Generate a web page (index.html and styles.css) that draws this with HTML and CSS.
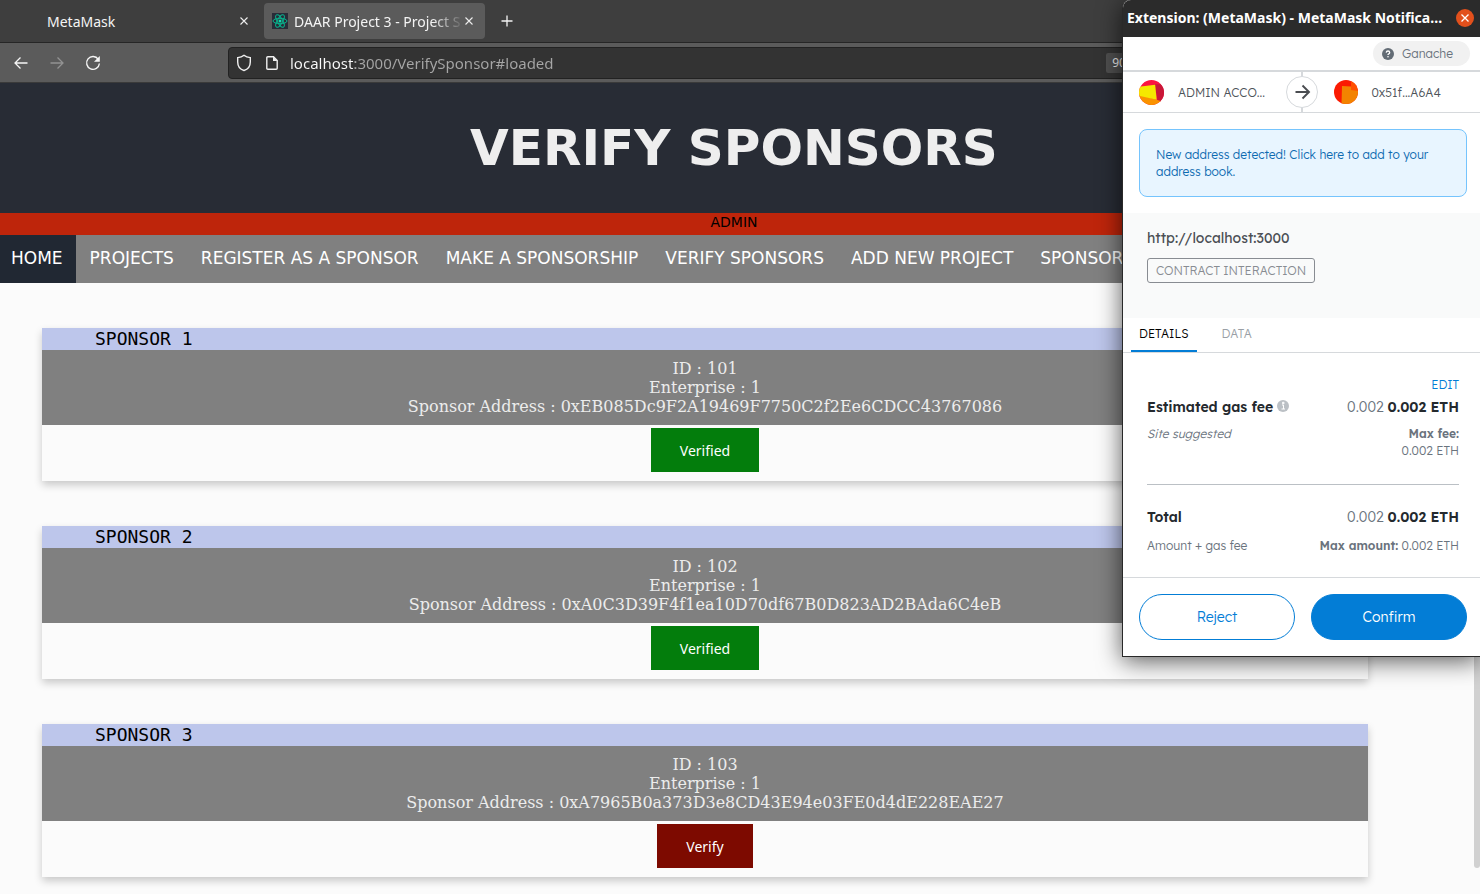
FILE: index.html
```html
<!DOCTYPE html>
<html lang="en">
<head>
<meta charset="utf-8">
<title>DAAR Project 3 - Project Sponsors</title>
<link rel="stylesheet" href="styles.css">
</head>
<body>
<div class="browser">
  <div class="tabs">
    <div class="tab">
      <span class="tab-label">MetaMask</span>
      <button class="icon-btn" aria-label="Close MetaMask tab"><svg width="10" height="10" viewBox="0 0 10 10"><path d="M1.5 1.5l7 7M8.500 1.500l-7 7" stroke="#eee" stroke-width="1.1" fill="none"/></svg></button>
    </div>
    <div class="tab tab-active">
      <svg class="favicon" width="16" height="16" viewBox="0 0 16 16"><rect width="16" height="16" fill="#282c38"/><g fill="none" stroke="#08b38d" stroke-width="1"><ellipse cx="8" cy="8" rx="7" ry="2.700"/><ellipse cx="8" cy="8" rx="7" ry="2.700" transform="rotate(60 8 8)"/><ellipse cx="8" cy="8" rx="7" ry="2.700" transform="rotate(120 8 8)"/></g><circle cx="8" cy="8" r="1.500" fill="#10dcae"/></svg>
      <span class="tab-label tab-fade">DAAR Project 3 - Project S</span>
      <button class="icon-btn" aria-label="Close project tab"><svg width="10" height="10" viewBox="0 0 10 10"><path d="M1.500 1.500l7 7M8.500 1.500l-7 7" stroke="#eee" stroke-width="1.1" fill="none"/></svg></button>
    </div>
    <button class="icon-btn new-tab" aria-label="New tab"><svg width="12" height="12" viewBox="0 0 12 12"><path d="M6 .5v11M.5 6h11" stroke="#f4f4f4" stroke-width="1.300"/></svg></button>
  </div>
  <div class="toolbar">
    <div class="nav-buttons">
      <button class="icon-btn" aria-label="Back"><svg width="16" height="16" viewBox="0 0 16 16" fill="none" stroke="#f6f6f6" stroke-width="1.300"><path d="M14.500 8H2M7.500 2.500L2 8l5.500 5.500"/></svg></button>
      <button class="icon-btn" aria-label="Forward"><svg width="16" height="16" viewBox="0 0 16 16" fill="none" stroke="#929292" stroke-width="1.300"><path d="M1.500 8H14M8.500 2.500L14 8l-5.500 5.500"/></svg></button>
      <button class="icon-btn" aria-label="Reload"><svg width="16" height="16" viewBox="0 0 16 16"><path d="M13.300 4.300A6.400 6.400 0 1 0 14.400 8.500" fill="none" stroke="#f6f6f6" stroke-width="1.400"/><path d="M14.800 1v5.800H9z" fill="#f6f6f6"/></svg></button>
    </div>
    <div class="urlbar">
      <svg width="16" height="18" viewBox="0 0 16 18" fill="none" stroke="#f0f0f0" stroke-width="1.400"><path d="M8 1.300C6.300 2.700 4.200 3.400 1.700 3.600V8c0 3.800 2.300 7.300 6.300 8.500 4-1.200 6.300-4.700 6.300-8.500V3.600C11.800 3.400 9.700 2.700 8 1.300z"/></svg>
      <svg width="12" height="14" viewBox="0 0 12 14"><path d="M1.800.8h5.700l3.700 3.700v7.700q0 1-1 1H1.800q-1 0-1-1V1.800q0-1 1-1z" fill="none" stroke="#f0f0f0" stroke-width="1.400"/><path d="M7 .5v4.600h4.500z" fill="#f0f0f0"/></svg>
      <input class="url" type="text" aria-label="Address" value="localhost:3000/VerifySponsor#loaded">
      <button class="zoom">90%</button>
    </div>
  </div>
  <div class="viewport">
    <div class="page">
      <header class="hero"><h1>VERIFY SPONSORS</h1></header>
      <div class="role">ADMIN</div>
      <nav class="menu">
        <a class="current" href="#home">HOME</a>
        <a href="#projects">PROJECTS</a>
        <a href="#register">REGISTER AS A SPONSOR</a>
        <a href="#make">MAKE A SPONSORSHIP</a>
        <a href="#verify">VERIFY SPONSORS</a>
        <a href="#add">ADD NEW PROJECT</a>
        <a href="#sponsors">SPONSORS</a>
      </nav>
      <main class="cards">
        <section class="card">
          <h2>SPONSOR 1</h2>
          <div class="info"><p>ID : 101</p><p>Enterprise : 1</p><p>Sponsor Address : 0xEB085Dc9F2A19469F7750C2f2Ee6CDCC43767086</p></div>
          <div class="action"><button class="state ok">Verified</button></div>
        </section>
        <section class="card">
          <h2>SPONSOR 2</h2>
          <div class="info"><p>ID : 102</p><p>Enterprise : 1</p><p>Sponsor Address : 0xA0C3D39F4f1ea10D70df67B0D823AD2BAda6C4eB</p></div>
          <div class="action"><button class="state ok">Verified</button></div>
        </section>
        <section class="card">
          <h2>SPONSOR 3</h2>
          <div class="info"><p>ID : 103</p><p>Enterprise : 1</p><p>Sponsor Address : 0xA7965B0a373D3e8CD43E94e03FE0d4dE228EAE27</p></div>
          <div class="action"><button class="state pending">Verify</button></div>
        </section>
      </main>
    </div>
    <div class="scrollbar"><div class="thumb"></div></div>
  </div>
</div>

<aside class="popup">
  <div class="titlebar">
    <span class="window-title">Extension: (MetaMask) - MetaMask Notifica…</span>
    <button class="close" aria-label="Close window"><svg width="18" height="18" viewBox="0 0 18 18"><circle cx="9" cy="9" r="9" fill="#e2501c"/><path d="M5.500 5.500l7 7M12.500 5.500l-7 7" stroke="#fff" stroke-width="1.300"/></svg></button>
  </div>
  <div class="network">
    <span class="chip"><svg width="12" height="12" viewBox="0 0 12 12"><circle cx="6" cy="6" r="6" fill="#636c75"/><path d="M4.200 4.600Q4.400 3 6 3t1.700 1.500Q7.700 5.400 6.700 5.900 6 6.200 6 7" fill="none" stroke="#fff" stroke-width="1.300"/><circle cx="6" cy="8.700" r=".8" fill="#fff"/></svg>Ganache</span>
  </div>
  <div class="parties">
    <div class="party"><svg width="25" height="25" viewBox="0 0 24 24"><clipPath id="a"><circle cx="12" cy="12" r="12"/></clipPath><g clip-path="url(#a)"><path fill="#fb1440" d="M0 0h24v24H0z"/><path fill="#c91738" d="M15 4l9 0v18l-6-1z"/><path fill="#fa9300" d="M0 14l24 7v3H0z"/><path fill="#f5e800" d="M0 6.500L15.500 4.500 17 19 0 15z"/></g></svg><span>ADMIN ACCO...</span></div>
    <div class="arrow"><svg width="32" height="32" viewBox="0 0 32 32"><circle cx="16" cy="16" r="15.500" fill="#fff" stroke="#d6d9dc"/><path d="M9.500 16h13M16.500 9.500L23 16l-6.500 6.500" fill="none" stroke="#4a4d51" stroke-width="1.900"/></svg></div>
    <div class="party"><svg width="24" height="24" viewBox="0 0 24 24"><clipPath id="b"><circle cx="12" cy="12" r="12"/></clipPath><g clip-path="url(#b)"><path fill="#fb1b02" d="M0 0h24v24H0z"/><path fill="#ff5000" d="M17 0h7v12h-7z"/><path fill="#f38300" d="M8 6l9 .5 0 3.500 7 1v13H7.500z"/></g></svg><span>0x51f...A6A4</span></div>
  </div>
  <div class="notice-wrap"><a class="notice" href="#address-book">New address detected! Click here to add to your address book.</a></div>
  <div class="origin"><p>http://localhost:3000</p><span class="tag">CONTRACT INTERACTION</span></div>
  <div class="detail-tabs"><button class="selected">DETAILS</button><button>DATA</button></div>
  <div class="fees">
    <div class="edit"><a href="#edit">EDIT</a></div>
    <div class="row main"><strong>Estimated gas fee<svg class="hint" width="12" height="12" viewBox="0 0 12 12"><circle cx="6" cy="6" r="6" fill="#bbc0c5"/><path d="M5 5h1.500v4M4.500 9h3.500M5.500 2.300h1.500v1.400H5.500z" fill="none" stroke="#fff" stroke-width="1"/></svg></strong><span>0.002 <b>0.002 ETH</b></span></div>
    <div class="row sub"><em>Site suggested</em><span class="max"><b>Max fee:</b><br>0.002 ETH</span></div>
    <hr>
    <div class="row main"><strong>Total</strong><span>0.002 <b>0.002 ETH</b></span></div>
    <div class="row sub total"><span>Amount + gas fee</span><span><b>Max amount:</b> 0.002 ETH</span></div>
  </div>
  <div class="decide"><button class="reject">Reject</button><button class="confirm">Confirm</button></div>
</aside>
</body>
</html>
```
FILE: styles.css
```css
* { box-sizing: border-box; }
body { margin: 0; overflow: hidden; background: #fbfbfb; font-family: "DejaVu Sans", sans-serif; }
button { font: inherit; border: 0; padding: 0; background: none; cursor: pointer; }
a { text-decoration: none; }
h1, h2, p { margin: 0; font-weight: normal; }
svg { flex: none; }

/* Browser chrome */
.browser { display: flex; flex-direction: column; height: 100vh; font-family: "Noto Sans", sans-serif; }
.tabs { display: flex; align-items: center; height: 43px; padding-left: 4px; background: #3e3e3e; border-bottom: 1px solid #262626; color: #f4f4f4; font-size: 14px; }
.tab { display: flex; align-items: center; width: 256px; height: 36px; padding: 0 11px 0 43px; }
.tab-active { width: 221px; margin-left: 4px; padding: 0 11px 0 8px; background: #5b5b5b; border-radius: 4px; }
.tab-label { flex: 1; overflow: hidden; white-space: nowrap; }
.tab-fade { margin-left: 6px; -webkit-mask-image: linear-gradient(to left, transparent, #000 32px); mask-image: linear-gradient(to left, transparent, #000 32px); }
.icon-btn { display: flex; align-items: center; justify-content: center; }
.new-tab { margin-left: 16px; }
.toolbar { display: flex; align-items: center; height: 40px; flex: none; background: #5b5b5b; border-bottom: 1px solid #3a3a3a; }
.nav-buttons { display: flex; gap: 20px; width: 228px; padding-left: 13px; }
.urlbar { display: flex; align-items: center; flex: 1; height: 32px; padding: 0 7px; background: #333; border: 1px solid #222; border-radius: 4px; }
.urlbar svg + svg { margin-left: 14px; }
.url { flex: 1; height: 28px; margin-left: 12px; padding: 0; border: 0; outline: 0; font: 15px "Noto Sans", sans-serif; color: transparent; background: linear-gradient(to right, #fafafa 65px, #a6a6a6 65px); -webkit-background-clip: text; background-clip: text; }
.zoom { width: 36px; height: 20px; margin-right: 330px; background: #4f4f4f; border-radius: 2px; color: #eee; font-size: 12px; }

/* Sponsor page */
.viewport { display: flex; flex: 1; min-height: 0; overflow: hidden; background: linear-gradient(#282c35 130px, #be250b 130px, #be250b 152px, #808080 152px, #808080 200px, #fbfbfb 200px); }
.page { flex: 1; min-width: 0; }
.scrollbar { display: flex; justify-content: flex-end; width: 12px; }
.thumb { width: 6px; height: 785px; background: #d1d1d1; border-radius: 3px; }
.hero { height: 130px; background: #282c35; text-align: center; }
.hero h1 { color: #eee; font: bold 50px/130px "DejaVu Sans", sans-serif; }
.role { height: 22px; background: #be250b; color: #000; text-align: center; font: 14px/18px "DejaVu Sans", sans-serif; }
.menu { display: flex; height: 48px; overflow: hidden; background: #808080; font: 17px/46px "DejaVu Sans", sans-serif; white-space: nowrap; }
.menu a { padding: 0 13px 0 14px; color: #fff; }
.menu .current { padding: 0 13px 0 11px; background: #212833; }
.cards { display: flex; flex-direction: column; gap: 45px; padding: 45px 100px 45px 42px; }
.card { background: #fbfbfb; box-shadow: 0 4px 8px rgba(0, 0, 0, .2); text-align: center; }
.card h2 { height: 22px; padding-left: 53px; background: #bdc6eb; color: #000; font: 18px/22px "DejaVu Sans Mono", monospace; text-align: left; }
.info { padding: 9px 0; background: #808080; color: #ececec; font: 16px/19px "DejaVu Serif", serif; }
.action { display: flex; justify-content: center; padding: 3px 0 9px; }
.state { height: 44px; padding: 0 29px; color: #fff; font-size: 14px; }
.ok { background: #037d0c; }
.pending { background: #7d0a00; }

/* Wallet window */
.popup { position: absolute; top: 0; right: 0; width: 358px; background: #fff; border: solid #292929; border-width: 0 0 1px 1px; border-radius: 8px 0 0 0; box-shadow: 0 4px 24px rgba(0, 0, 0, .65); color: #6a737d; font: 300 12px/17px Lexend, Lato, sans-serif; }
.titlebar { display: flex; align-items: center; height: 37px; padding: 0 6px 2px 4px; background: #2b2b2b; border-radius: 8px 0 0 0; color: #fff; font: bold 14px/20px "Noto Sans", sans-serif; }
.window-title { flex: 1; white-space: nowrap; }
.close { display: flex; }
.network { display: flex; justify-content: flex-end; height: 35px; padding: 4px 10px 0 0; border-bottom: 2px solid #d6d9dc; }
.chip { display: flex; align-items: center; gap: 8px; height: 25px; padding: 0 17px 0 9px; background: #f1f1f1; border-radius: 13px; }
.parties { display: flex; align-items: center; height: 41px; border-bottom: 1px solid #d6d9dc; color: #4e5359; }
.party { display: flex; align-items: center; gap: 14px; flex: 1; padding-left: 16px; white-space: nowrap; }
.arrow { display: flex; align-items: center; height: 40px; background: linear-gradient(#d6d9dc, #d6d9dc) center / 2px 100% no-repeat; }
.notice-wrap { padding: 16px 13px 16px 16px; }
.notice { display: block; min-height: 68px; padding: 16px; background: #e8f5ff; border: 1px solid #75c4fd; border-radius: 8px; color: #0e6bb1; }
.origin { height: 105px; padding: 15px 24px; background: #f9fafa; color: #4b4f54; font-size: 14px; line-height: 20px; }
.tag { display: inline-block; margin-top: 10px; padding: 0 8px; border: 1px solid #888c92; border-radius: 3px; color: #888c92; font-size: 12px; line-height: 23px; }
.detail-tabs { display: flex; gap: 17px; height: 35px; padding-left: 8px; border-bottom: 1px solid #d6d9dc; }
.detail-tabs button { padding: 0 8px 2px; border-bottom: 2px solid transparent; color: #9a9fa6; }
.detail-tabs .selected { border-color: #037dd6; color: #000; }
.fees { padding: 23px 21px 23px 24px; }
.edit { text-align: right; line-height: 18px; }
.edit a { color: #037dd6; }
.row { display: flex; justify-content: space-between; }
.row b, .row strong { font-weight: 600; }
.main { padding-top: 3px; font-size: 14px; line-height: 21px; }
.main b, .main strong { color: #24292e; }
.hint { margin-left: 4px; }
.sub { padding-top: 7px; }
.total { padding-top: 9px; }
.max { text-align: right; }
.fees hr { margin: 25px 0 19px; border: 0; border-top: 1px solid #bbc0c5; }
.decide { display: flex; gap: 16px; padding: 16px 13px 16px 16px; border-top: 1px solid #d6d9dc; }
.decide button { flex: 1; height: 46px; border: 1px solid #037dd6; border-radius: 23px; color: #037dd6; font-size: 14px; }
.decide .confirm { background: #037dd6; color: #fff; }
```
